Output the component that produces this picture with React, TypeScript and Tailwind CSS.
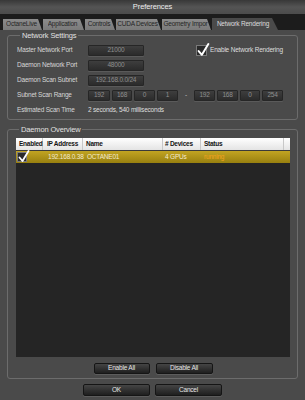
import React from "react";

const tabs: [string, number][] = [
  ["OctaneLive", 39],
  ["Application", 41],
  ["Controls", 30],
  ["CUDA Devices", 45],
  ["Geometry Impor", 49],
];

function Field({ value, w }: { value: string; w: number }) {
  return (
    <div
      className="h-[11px] flex items-center justify-center rounded-[1px] border border-[#262626] bg-gradient-to-b from-[#3e3e3e] to-[#2b2b2b] text-[#8e8e8e] shadow-[0_1px_0_#5a5a5a]"
      style={{ width: w }}
    >
      {value}
    </div>
  );
}

function Check({ size }: { size: number }) {
  return (
    <div
      className="relative shrink-0 border border-[#7a7a7a] bg-[#2a2a2a]"
      style={{ width: size, height: size }}
    >
      <svg
        className="absolute left-[0px] top-[-3px]"
        width={size + 2}
        height={size + 3}
        viewBox="0 0 12 13"
      >
        <path d="M1.5 7.5 L4.5 11 L10.5 1" fill="none" stroke="#ffffff" strokeWidth="1.8" strokeLinecap="round" strokeLinejoin="round" />
      </svg>
    </div>
  );
}

function Btn({ label, w, h }: { label: string; w: number; h: number }) {
  return (
    <div
      className="flex items-center justify-center rounded-[2px] border border-[#151515] bg-gradient-to-b from-[#454545] to-[#1f1f1f] text-[#e6e6e6] shadow-[0_1px_0_#5c5c5c]"
      style={{ width: w, height: h }}
    >
      {label}
    </div>
  );
}

export default function App() {
  const rowCls = "h-[15px] flex items-center";
  return (
    <div className="w-[305px] h-[400px] overflow-hidden flex flex-col bg-[#4a4a4a] font-['Liberation_Sans',Arial,sans-serif] text-[6.5px] tracking-[-0.2px] text-[#d6d6d6] leading-none">
      {/* title bar */}
      <div className="h-[14px] shrink-0 flex items-center justify-center bg-gradient-to-b from-[#383838] via-[#545454] to-[#4c4c4c] text-[7.5px] tracking-[-0.1px] text-[#ececec]">
        Preferences
      </div>
      {/* tab bar */}
      <div className="h-[16px] shrink-0 bg-[#1c1c1c] flex items-end pl-[3px] gap-[1px]">
        {tabs.map(([t, w]) => (
          <div
            key={t}
            className="h-[11px] flex items-center justify-center bg-gradient-to-b from-[#8c8c8c] to-[#7a7a7a] text-[#262626] [clip-path:polygon(0_0,calc(100%-4px)_0,100%_100%,0_100%)]"
            style={{ width: w }}
          >
            <span className="pr-[2px] whitespace-nowrap overflow-hidden">{t}</span>
          </div>
        ))}
        <div className="h-[12px] w-[66px] flex items-center justify-center bg-[#4a4a4a] text-[#dcdcdc] [clip-path:polygon(0_0,calc(100%-6px)_0,100%_100%,0_100%)]">
          <span className="pr-[4px]">Network Rendering</span>
        </div>
      </div>

      {/* body */}
      <div className="flex-1 flex flex-col px-[7px] pt-[1px]">
        <fieldset className="border border-[#6c6c6c] rounded-[3px] pl-[9px] pt-[3px] pb-[1px] h-[89px]">
          <legend className="ml-[3px] px-[2px] text-[7.5px] tracking-[-0.15px] leading-[9px] text-[#e0e0e0]">
            Network Settings
          </legend>
          <div className={rowCls}>
            <div className="w-[71px]">Master Network Port</div>
            <Field value="21000" w={56} />
            <div className="ml-[52px] flex items-center gap-[3px]">
              <Check size={11} />
              <span className="text-[#dedede]">Enable Network Rendering</span>
            </div>
          </div>
          <div className={rowCls}>
            <div className="w-[71px]">Daemon Network Port</div>
            <Field value="48000" w={56} />
          </div>
          <div className={rowCls}>
            <div className="w-[71px]">Daemon Scan Subnet</div>
            <Field value="192.168.0.0/24" w={56} />
          </div>
          <div className={rowCls}>
            <div className="w-[71px]">Subnet Scan Range</div>
            <div className="flex gap-[2px]">
              <Field value="192" w={22} />
              <Field value="168" w={20} />
              <Field value="0" w={21} />
              <Field value="1" w={21} />
            </div>
            <div className="w-[16px] text-center text-[#bdbdbd]">-</div>
            <div className="flex gap-[2px]">
              <Field value="192" w={21} />
              <Field value="168" w={21} />
              <Field value="0" w={20} />
              <Field value="254" w={21} />
            </div>
          </div>
          <div className={rowCls}>
            <div className="w-[71px]">Estimated Scan Time</div>
            <div className="text-[#dedede]">2 seconds, 540 milliseconds</div>
          </div>
        </fieldset>

        <fieldset className="mt-[5px] border border-[#6c6c6c] rounded-[3px] pl-[8px] pr-[7px] pt-[4px] pb-[4px] flex flex-col">
          <legend className="ml-[3px] px-[2px] text-[7.5px] tracking-[-0.15px] leading-[9px] text-[#e0e0e0]">
            Daemon Overview
          </legend>
          <div className="h-[219px] bg-[#252525] flex flex-col">
            <div className="h-[12px] flex bg-gradient-to-b from-[#ffffff] to-[#e4e4e4] text-[#141414] font-bold tracking-[-0.25px]">
              <div className="w-[27px] pl-[3px] flex items-center border-r border-[#c8c8c8]">Enabled</div>
              <div className="w-[40px] pl-[4px] flex items-center border-r border-[#c8c8c8]">IP Address</div>
              <div className="w-[80px] pl-[3px] flex items-center border-r border-[#c8c8c8]">Name</div>
              <div className="w-[38px] pl-[2px] flex items-center border-r border-[#c8c8c8]">#&nbsp;Devices</div>
              <div className="w-[83px] pl-[3px] flex items-center border-r border-[#c8c8c8]">Status</div>
              <div className="flex-1" />
            </div>
            <div className="h-[1px] bg-[#3a3a3a]" />
            <div className="h-[12px] flex items-center bg-gradient-to-b from-[#c2a422] to-[#98800f] text-[#f3ead0]">
              <div className="w-[27px] pl-[1px] flex items-center">
                <Check size={10} />
              </div>
              <div className="w-[40px] pl-[5px]">192.168.0.38</div>
              <div className="w-[80px] pl-[4px]">OCTANE01</div>
              <div className="w-[38px] pl-[2px]">4 GPUs</div>
              <div className="pl-[3px] text-[#f2a21e]">running</div>
            </div>
          </div>
          <div className="mt-[6px] flex justify-center gap-[6px]">
            <Btn label="Enable All" w={56} h={11} />
            <Btn label="Disable All" w={57} h={11} />
          </div>
        </fieldset>

        <div className="mt-[5px] flex justify-center gap-[5px]">
          <Btn label="OK" w={67} h={12} />
          <Btn label="Cancel" w={67} h={12} />
        </div>
      </div>
    </div>
  );
}
